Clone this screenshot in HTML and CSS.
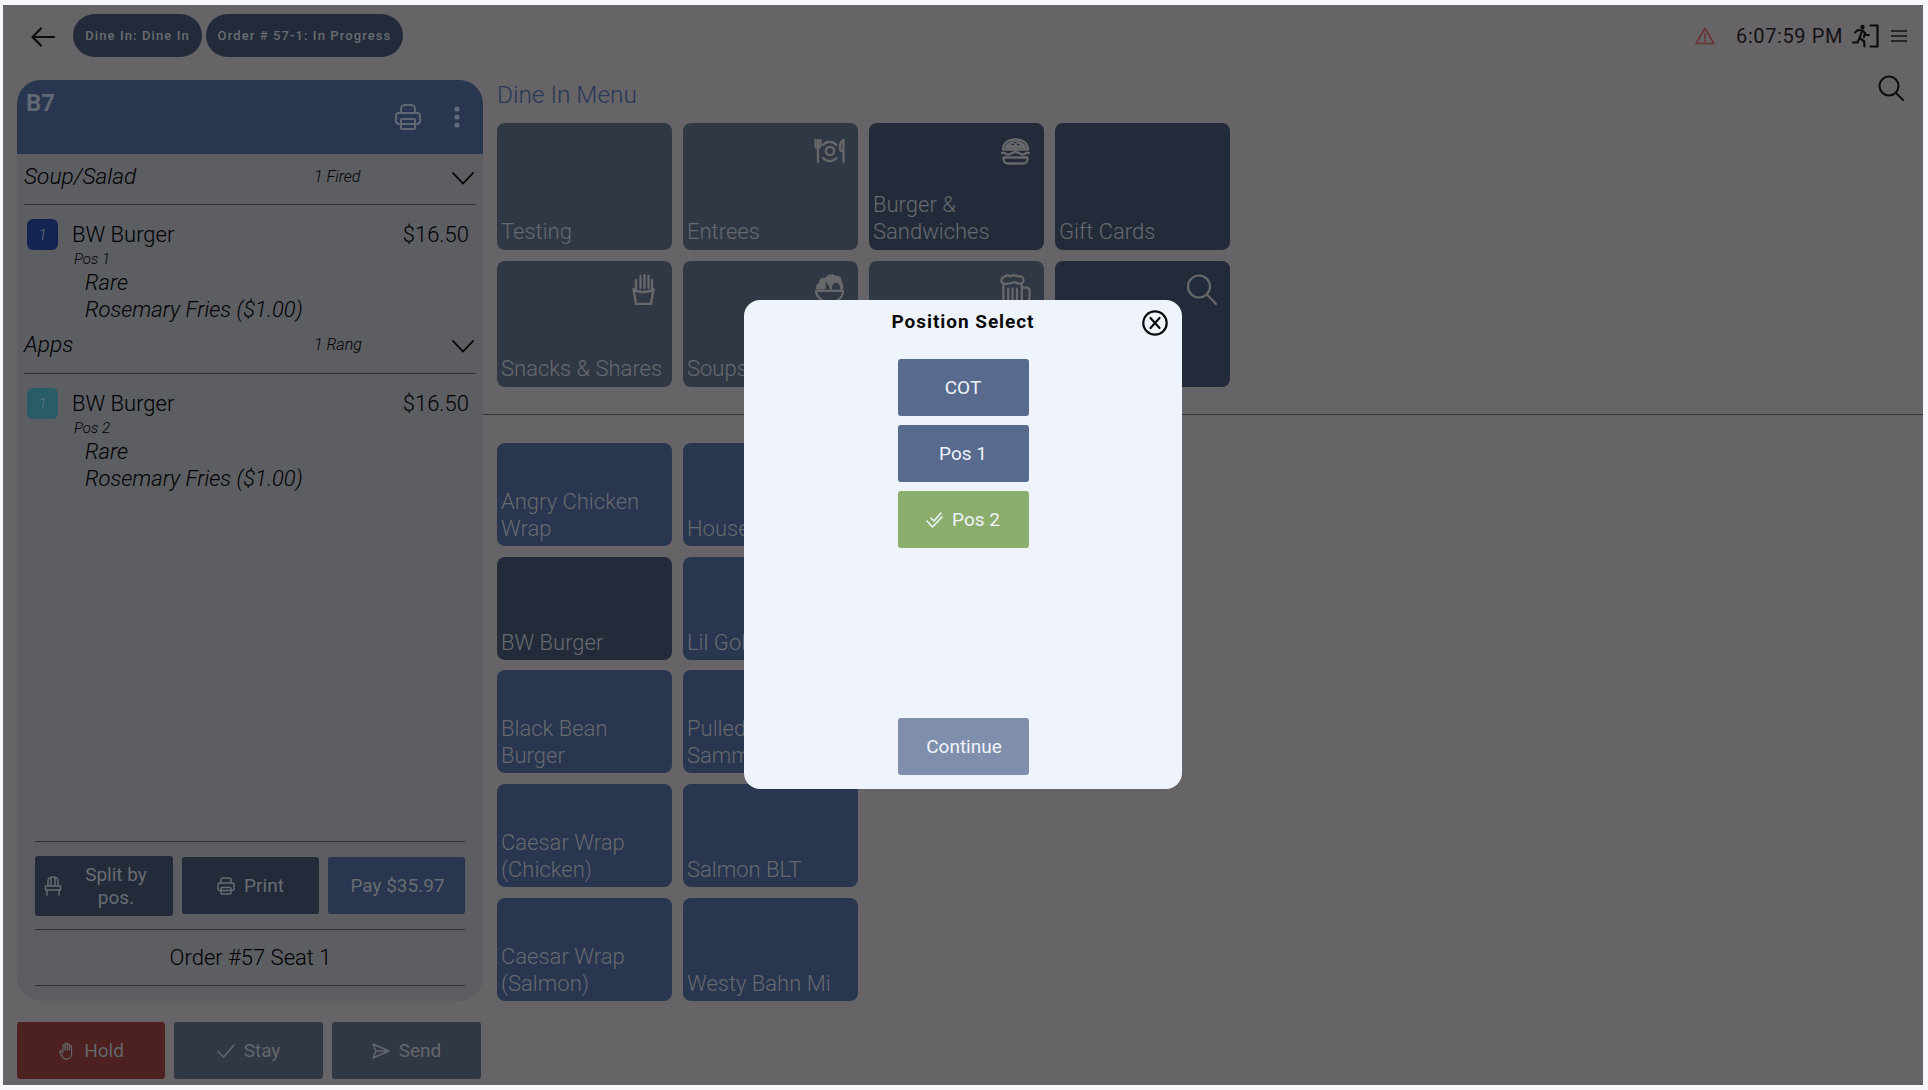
FILE: index.html
```html
<!DOCTYPE html>
<html lang="en">
<head>
<meta charset="utf-8">
<title>Position Select</title>
<link rel="stylesheet" href="styles.css">
</head>
<body>
<div class="app">
  <header class="topbar">
    <svg class="back" viewBox="0 0 24 20"><path d="M23 10H2M10 1.500 1.500 10l8.500 8.500"/></svg>
    <span class="chip chip-first">Dine In: Dine In</span>
    <span class="chip chip-second">Order # 57-1: In Progress</span>
    <div class="status">
      <svg class="warn" viewBox="0 0 20 18"><path d="M10 1.500 1 16.500h18z"/><path d="M10 6.500v5M10 13.500v1"/></svg>
      <span class="clock">6:07:59 PM</span>
      <svg class="exit" viewBox="0 0 28 24"><circle cx="10.500" cy="3" r="2.200" class="solid"/><path d="M18.500 1.500h7v21h-7M3 8.500 6 6l5 .5 3 4.500h3M10 7l-2.500 7 4.500 3 .5 5.500M7.500 14 5.500 18.500H1M13 9l-1 4"/></svg>
      <svg class="menu" viewBox="0 0 16 12"><path d="M0 1h16M0 6h16M0 11h16"/></svg>
    </div>
  </header>
  <div class="main">
    <aside class="left">
      <section class="panel">
        <div class="panel-head">
          <span class="table-name">B7</span>
          <svg class="head-print" viewBox="0 0 26 26"><path d="M6 9V5a4 4 0 0 1 4-4h6a4 4 0 0 1 4 4v4"/><rect x="1" y="9" width="24" height="11" rx="3"/><rect x="6" y="15" width="14" height="10" rx="1"/></svg>
          <svg class="head-dots" viewBox="0 0 6 22"><circle cx="3" cy="3" r="2.600"/><circle cx="3" cy="11" r="2.600"/><circle cx="3" cy="19" r="2.600"/></svg>
        </div>
        <div class="course">
          <span class="course-name">Soup/Salad</span>
          <span class="course-state">1 Fired</span>
          <svg class="chev" viewBox="0 0 22 13"><path d="M1 1l10 10.500L21 1"/></svg>
        </div>
        <div class="item">
          <div class="item-row">
            <span class="badge badge-fired">1</span>
            <span class="item-name">BW Burger</span>
            <span class="item-price">$16.50</span>
          </div>
          <div class="item-pos">Pos 1</div>
          <div class="item-mod">Rare</div>
          <div class="item-mod">Rosemary Fries ($1.00)</div>
        </div>
        <div class="course course-second">
          <span class="course-name">Apps</span>
          <span class="course-state">1 Rang</span>
          <svg class="chev" viewBox="0 0 22 13"><path d="M1 1l10 10.500L21 1"/></svg>
        </div>
        <div class="item">
          <div class="item-row">
            <span class="badge badge-rang">1</span>
            <span class="item-name">BW Burger</span>
            <span class="item-price">$16.50</span>
          </div>
          <div class="item-pos">Pos 2</div>
          <div class="item-mod">Rare</div>
          <div class="item-mod">Rosemary Fries ($1.00)</div>
        </div>
        <div class="panel-foot">
          <div class="actions">
            <button class="act act-split">
              <svg class="chair" viewBox="0 0 18 20"><path d="M4 10V5a5 4 0 0 1 10 0v5M7 1.500V10M11 1.500V10M1.500 10h15v4h-15zM3 14v5M15 14v5"/></svg>
              <span class="split-label">Split by pos.</span>
            </button>
            <button class="act act-print">
              <svg class="print-small" viewBox="0 0 18 18"><path d="M4 6V3a2 2 0 0 1 2-2h6a2 2 0 0 1 2 2v3"/><rect x="1" y="6" width="16" height="7.500" rx="2"/><rect x="4" y="10.500" width="10" height="6.500" rx="1"/></svg>
              Print
            </button>
            <button class="act act-pay">Pay $35.97</button>
          </div>
          <div class="order-no">Order #57 Seat 1</div>
        </div>
      </section>
      <div class="bottom">
        <button class="big big-hold">
          <svg class="ico-hand" viewBox="0 0 18 20"><path d="M5 10V4.500a1.200 1.200 0 0 1 2.400 0V9M7.400 9V2.500a1.200 1.200 0 0 1 2.400 0V9M9.800 9V3.200a1.200 1.200 0 0 1 2.400 0V9M12.200 9V5a1.200 1.200 0 0 1 2.400 0v8c0 3.500-2.500 6-5.500 6-3 0-4.300-1.500-5.500-4L1.500 11.500c-.6-1.200 1-2.200 2-1.200L5 12"/></svg>
          Hold
        </button>
        <button class="big">
          <svg class="ico-check" viewBox="0 0 18 14"><path d="M1 7.500 6.500 13 17 1"/></svg>
          Stay
        </button>
        <button class="big">
          <svg class="ico-send" viewBox="0 0 18 16"><path d="M1 1l16 7-16 7 3-7zM4 8h13"/></svg>
          Send
        </button>
      </div>
    </aside>
    <main class="menu-area">
      <div class="menu-head">
        <h1 class="menu-title">Dine In Menu</h1>
        <svg class="search-top" viewBox="0 0 26 26"><circle cx="11" cy="11" r="9.500"/><path d="M18 18l7 7"/></svg>
      </div>
      <div class="cats">
        <div class="tile tile-muted"><span class="tile-text">Testing</span></div>
        <div class="tile tile-muted">
          <svg class="tile-ico ico-plate" viewBox="0 0 31 24"><path class="fat" d="M1.500 1v5.500a2.500 2.500 0 0 0 5 0V1M4 1v22M29.500 1c-2.500 1-3.500 4-3.500 8 0 2.500 1 3.500 3.500 3.500V1zM29.500 12v11"/><circle class="fat" cx="16" cy="12" r="4.200"/><path class="fat" d="M9 6a9 9 0 0 1 13.500 0M9 19a9 9 0 0 0 13.500 0"/></svg>
          <span class="tile-text">Entrees</span>
        </div>
        <div class="tile">
          <svg class="tile-ico ico-burger" viewBox="0 0 29 27"><path class="fat" d="M2 11.500C2 5 7 1.500 14.500 1.500S27 5 27 11.500zM1 15c2.500-1.500 3.500 1.500 6.500 1.500S11 14 14.500 14s4 2.500 7 2.500 4-3 6.500-1.500M2.500 19.500h24v1.500a4.500 4.500 0 0 1-4.500 4.500H7A4.500 4.500 0 0 1 2.500 21z"/><path class="fat-fill" d="M3.500 10.500C4 6 8 3 14.500 3S25 6 25.500 10.500z"/><path class="seed" d="M11 6.500h1.500M16.500 6.500H18M14 4.500h1"/></svg>
          <span class="tile-text">Burger &amp; Sandwiches</span>
        </div>
        <div class="tile"><span class="tile-text">Gift Cards</span></div>
        <div class="tile tile-muted">
          <svg class="tile-ico ico-fries" viewBox="0 0 23 31"><path class="fat" d="M1.500 15c3 2.500 6.500 3 10 3s7-.5 10-3l-2.500 15H4zM4 15V6M8.500 14V2M12.500 14V1M16.500 14V2M20 15V6"/></svg>
          <span class="tile-text">Snacks &amp; Shares</span>
        </div>
        <div class="tile tile-muted">
          <svg class="tile-ico" viewBox="0 3 31 32"><path class="solid" d="M2 19c-1-3 0-6 3-7-1-4 3-6 6-5 2-4 8-5 11-2 3-1 7 2 6 6 2 2 2 5 1.500 8h-3.500c1-4-1-7-4-7-3 0-4 3-4 7h-2c-.5-3-2-6-5-8 1 3 1 6 0 8z"/><path class="fat" d="M1.500 20.500h28c0 5-3 8-6 9.500v1.500H8V30c-3-1.500-6-4.500-6.500-9.500z"/></svg>
          <span class="tile-text">Soups</span>
        </div>
        <div class="tile tile-muted">
          <svg class="tile-ico" viewBox="0 0 31 32"><path class="fat" d="M3 10v21h19V10M22 14h5a3 3 0 0 1 3 3v8a3 3 0 0 1-3 3h-5M8 15v12M12.500 15v12M17 15v12M3.500 10C0 9 0 4 3.500 3.500 5 1 8 1 10 2.500c2-1.500 6-1.500 8 0 2-1 5 .5 5.500 2.500 1 3-1 5-4 5-2 0-3-1.500-5-1.500S10 10 8 10s-3 .5-4.500 0z"/></svg>
          <span class="tile-text">Drinks</span>
        </div>
        <div class="tile">
          <svg class="tile-ico" viewBox="0 0 30 31"><circle class="thin" cx="12.500" cy="12.500" r="11"/><path class="thin" d="M20.500 20.500 29.500 30"/></svg>
          <span class="tile-text">Search</span>
        </div>
      </div>
      <div class="rule"></div>
      <div class="items">
        <div class="tile tile-item"><span class="tile-text">Angry Chicken Wrap</span></div>
        <div class="tile tile-item"><span class="tile-text">House Burger</span></div>
        <div class="tile tile-item tile-dark"><span class="tile-text">BW Burger</span></div>
        <div class="tile tile-item"><span class="tile-text">Lil Gobbler</span></div>
        <div class="tile tile-item"><span class="tile-text">Black Bean Burger</span></div>
        <div class="tile tile-item"><span class="tile-text">Pulled Pork Sammich</span></div>
        <div class="tile tile-item"><span class="tile-text">Caesar Wrap (Chicken)</span></div>
        <div class="tile tile-item"><span class="tile-text">Salmon BLT</span></div>
        <div class="tile tile-item"><span class="tile-text">Caesar Wrap (Salmon)</span></div>
        <div class="tile tile-item"><span class="tile-text">Westy Bahn Mi</span></div>
      </div>
    </main>
  </div>
  <div class="modal">
    <div class="modal-head">
      <h2 class="modal-title">Position Select</h2>
      <svg class="modal-close" viewBox="0 0 26 26"><circle cx="13" cy="13" r="11.700"/><path d="M8.500 8l9 10M17.500 8l-9 10"/></svg>
    </div>
    <button class="pos">COT</button>
    <button class="pos">Pos 1</button>
    <button class="pos pos-on">
      <svg class="pos-check" viewBox="0 0 17 16"><path d="M1 9l5.500 6L16 5M5 6l3 3 7-8"/></svg>
      Pos 2
    </button>
    <button class="pos pos-continue">Continue</button>
  </div>
</div>
</body>
</html>
```
FILE: styles.css
```css
* { box-sizing: border-box; }
html, body { margin: 0; padding: 0; }
body {
  width: 1928px;
  height: 1090px;
  overflow: hidden;
  background: #f6f8fb;
  font-family: Roboto, "Liberation Sans", sans-serif;
  padding: 5px 5px 5px 3px;
}
svg { display: block; fill: none; stroke-linecap: round; stroke-linejoin: round; }
button { font-family: inherit; border: 0; padding: 0; }
h1, h2 { margin: 0; font-weight: 400; }

.app { position: relative; width: 1920px; height: 1080px; background: #666466; }

/* top bar */
.topbar { height: 75px; display: flex; align-items: flex-start; padding: 9px 16px 0 28px; }
.back { width: 24px; height: 20px; margin-top: 13px; stroke: #0c0c0e; stroke-width: 2.200; }
.chip {
  height: 43px; border-radius: 22px; background: #232b3a; color: #696c71;
  font-size: 13px; font-weight: 500; letter-spacing: 1.100px;
  display: flex; align-items: center; justify-content: center;
}
.chip-first { width: 129px; margin-left: 18px; }
.chip-second { width: 197px; margin-left: 4px; }
.status { margin-left: auto; display: flex; align-items: center; height: 43px; }
.warn { width: 20px; height: 18px; stroke: #693034; stroke-width: 1.500; }
.clock { margin-left: 21px; font-size: 20px; letter-spacing: .6px; color: #121215; }
.exit { width: 28px; height: 24px; margin-left: 9px; stroke: #0c0c0e; stroke-width: 2.200; }
.exit .solid { fill: #0c0c0e; stroke: none; }
.menu { width: 16px; height: 12px; margin-left: 11px; stroke: #121215; stroke-width: 1.700; }

.main { display: flex; height: 1005px; }

/* order panel */
.left { width: 480px; padding-left: 14px; }
.panel {
  width: 466px; height: 921px; background: #5c5e62; border-radius: 24px;
  display: flex; flex-direction: column; overflow: hidden;
}
.panel-head {
  height: 74px; flex: none; background: #293650; display: flex; align-items: flex-start;
  padding: 9px 23px 0 9px;
}
.table-name { font-size: 24px; font-weight: 700; color: #616773; line-height: 28px; }
.head-print { width: 26px; height: 26px; margin: 15px 0 0 auto; stroke: #616773; stroke-width: 2; }
.head-dots { width: 6px; height: 22px; margin: 17px 0 0 33px; fill: #616773; }

.course {
  margin: 0 7px; height: 51px; flex: none; border-bottom: 1px solid #303136;
  display: flex; align-items: center; padding-bottom: 6px; font-style: italic; color: #000;
}
.course-second { height: 46px; padding-bottom: 12px; }
.course-name { width: 290px; font-size: 22.700px; font-weight: 300; }
.course-state { width: 138px; font-size: 16px; font-weight: 300; }
.chev { width: 22px; height: 13px; margin-top: 4px; stroke: #000; stroke-width: 1.800; }

.item { padding: 14px 14px 0 10px; color: #000; height: 123px; flex: none; }
.item-row { display: flex; align-items: center; height: 31px; }
.badge {
  width: 31px; height: 31px; border-radius: 6px; font-size: 15px; font-style: italic; font-weight: 300;
  display: flex; align-items: center; justify-content: center;
}
.badge-fired { background: #142450; color: #6b7282; }
.badge-rang { background: #285c68; color: #5c7a82; }
.item-name { margin-left: 14px; font-size: 22px; font-weight: 300; }
.item-price { margin-left: auto; font-size: 22px; font-weight: 300; }
.item-pos { margin-left: 47px; font-size: 15px; font-style: italic; font-weight: 300; line-height: 19px; }
.item-mod { margin-left: 58px; font-size: 22px; font-style: italic; font-weight: 300; line-height: 27px; }

.panel-foot { margin: auto 18px 0; height: 160px; flex: none; border-top: 1px solid #303136; }
.actions { display: flex; gap: 9px; align-items: center; height: 88px; border-bottom: 1px solid #303136; }
.act {
  width: 137px; height: 57px; border-radius: 3px; background: #232b3a; color: #696c71;
  font-size: 19px; display: flex; align-items: center; justify-content: center;
}
.act-split { width: 138px; height: 60px; padding: 0 11px 0 9px; }
.chair { width: 18px; height: 20px; stroke: #696c71; stroke-width: 1.500; flex: none; }
.split-label { flex: 1; text-align: center; line-height: 23px; padding-left: 8px; }
.print-small { width: 18px; height: 18px; margin-right: 9px; stroke: #696c71; stroke-width: 1.500; }
.act-pay { background: #293650; padding-left: 2px; }
.order-no {
  height: 56px; border-bottom: 1px solid #303136; display: flex; align-items: center; justify-content: center;
  font-size: 22px; font-weight: 300; color: #000; padding-left: 1px;
}

.bottom { display: flex; gap: 9px; margin-top: 21px; }
.big {
  width: 149px; height: 57px; border-radius: 3px; background: #313845; color: #64666c;
  font-size: 19px; display: flex; align-items: center; justify-content: center; gap: 9px;
}
.big-hold { width: 148px; background: #4c211f; }
.ico-hand { width: 17px; height: 18px; stroke: #64666c; stroke-width: 1.400; }
.ico-check { width: 18px; height: 14px; stroke: #64666c; stroke-width: 1.500; }
.ico-send { width: 18px; height: 16px; stroke: #64666c; stroke-width: 1.500; }

/* menu grid */
.menu-area { flex: 1; display: flex; flex-direction: column; }
.menu-head { height: 43px; display: flex; align-items: flex-start; padding: 0 19px 0 14px; }
.menu-title { font-size: 24.400px; font-weight: 300; line-height: 30px; color: #293859; }
.search-top { width: 26px; height: 26px; margin: -5px 0 0 auto; stroke: #0c0c0e; stroke-width: 2; }
.cats, .items { display: grid; grid-template-columns: repeat(4, 175px); column-gap: 11px; padding-left: 14px; }
.cats { grid-auto-rows: 126.500px; row-gap: 11px; }
.items { grid-template-columns: repeat(2, 175px); grid-auto-rows: 103px; row-gap: 10.700px; margin-top: 28px; }
.rule { height: 1px; background: #363639; margin: 27px 0 0 0; }
.tile {
  background: #232b3a; border-radius: 8px; padding: 0 5px 5px 4px; color: #67696e;
  display: flex; flex-direction: column; font-size: 22px; line-height: 27px; font-weight: 300;
}
.tile-muted { background: #313845; }
.tile-item { background: #293650; padding-bottom: 4px; }
.tile-dark { background: #232b3a; }
.tile-text { margin-top: auto; }
.tile-ico { width: 31px; height: 31px; margin: 13px 8px 0 auto; flex: none; }
.ico-plate { height: 24px; margin-top: 16px; }
.ico-burger { width: 29px; height: 27px; margin-top: 15px; margin-right: 9px; }
.ico-fries { width: 23px; margin-right: 12px; }
.tile-ico .fat { stroke: #68686a; stroke-width: 2.300; }
.tile-ico .thin { stroke: #68686a; stroke-width: 2.200; }
.tile-ico .solid { fill: #68686a; }
.tile-ico .fat-fill { fill: #68686a; }
.tile-ico .seed { stroke: #232b3a; stroke-width: 1.400; }

/* modal */
.modal {
  position: absolute; left: 741px; top: 295px; width: 438px; height: 489px;
  background: #eff3fb; border-radius: 16px; display: flex; flex-direction: column; align-items: center;
}
.modal-head { width: 100%; height: 59px; flex: none; position: relative; padding-top: 11px; text-align: center; }
.modal-title { font-size: 19px; font-weight: 700; letter-spacing: .95px; line-height: 22px; color: #0a0a0a; }
.modal-close { position: absolute; right: 14px; top: 10px; width: 26px; height: 26px; stroke: #0a0a0a; stroke-width: 2.200; }
.pos {
  width: 131px; height: 57px; flex: none; margin-bottom: 9px; border-radius: 3px; background: #586a8e;
  color: #eff3fb; font-size: 19px; font-weight: 400; display: flex; align-items: center; justify-content: center;
}
.pos-on { background: #8bae6d; gap: 9px; }
.pos-check { width: 17px; height: 16px; stroke: #eff3fb; stroke-width: 1.600; }
.pos-continue { margin: auto 0 14px; background: #7f8eab; padding-left: 2px; }
```
